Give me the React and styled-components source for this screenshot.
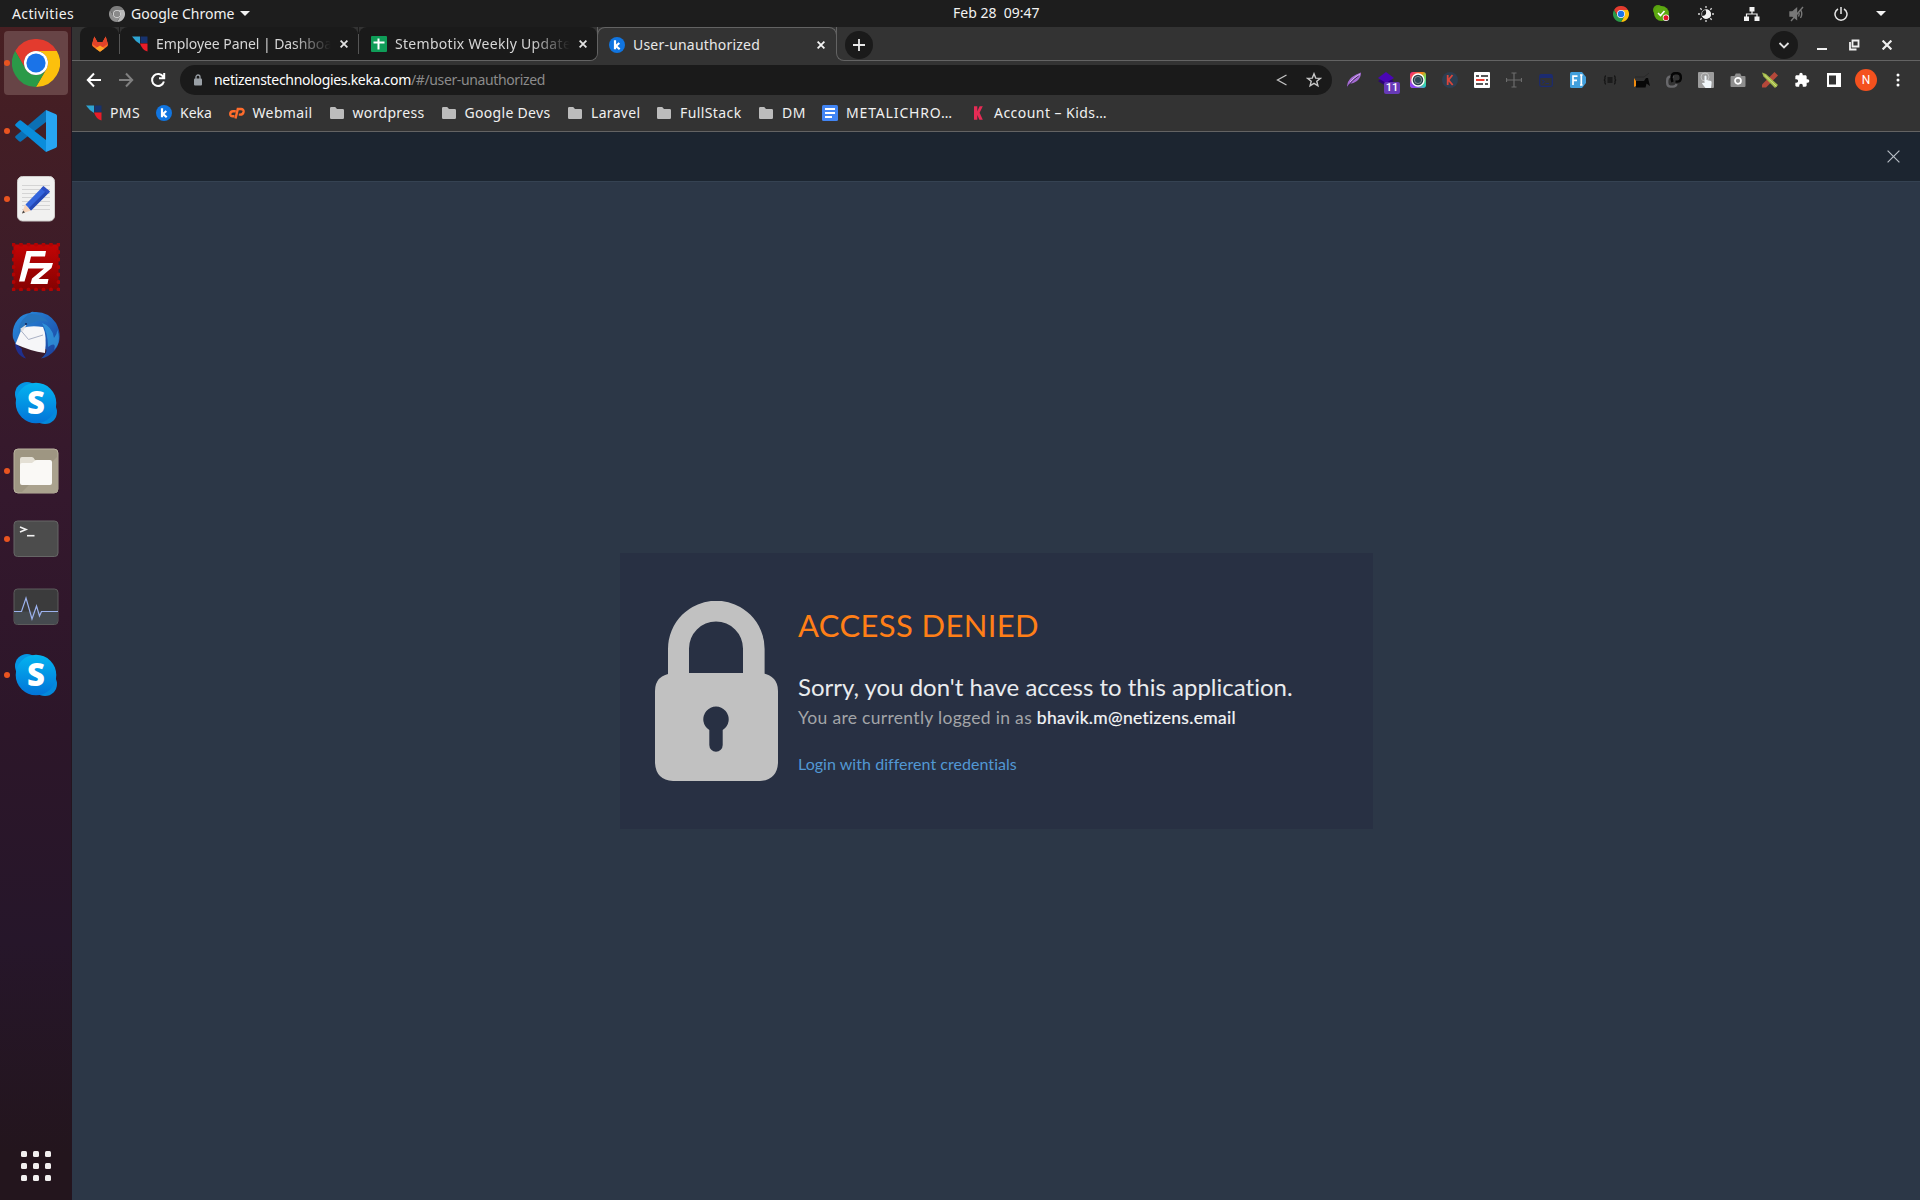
import React from 'react';
import styled, { createGlobalStyle } from 'styled-components';

const Global = createGlobalStyle`
  * { box-sizing: border-box; }
  body { margin: 0; overflow: hidden; background: #2c3747; }
  svg { display: block; flex: none; }
`;

const Desktop = styled.div`
  display: flex;
  flex-direction: column;
  width: 1920px;
  height: 1200px;
  font-family: 'Noto Sans', 'Open Sans', sans-serif;
  font-size: 14px;
  color: #fff;
`;

/* ---------- system bar ---------- */
const SystemBar = styled.header`
  display: grid;
  grid-template-columns: 1fr auto 1fr;
  align-items: center;
  height: 27px;
  flex: none;
  background: #1d1d1d;
  color: #f2f2f2;
`;
const BarLeft = styled.div`
  display: flex;
  align-items: center;
  padding-left: 12px;
`;
const BarRight = styled.div`
  display: flex;
  align-items: center;
  justify-content: flex-end;
  padding-right: 15px;
`;
const Label = styled.span`
  white-space: pre;
  line-height: 20px;
  letter-spacing: ${(p) => p.$track || 0}px;
`;
const AppMenu = styled.div`
  display: flex;
  align-items: center;
  margin-left: 35px;
  gap: 6px;
`;
const Clock = styled(Label)`
  margin-left: 73px;
`;
const Centered = styled.div`
  margin-top: -2px;
  width: 160px;
`;
const Slot = styled.span`
  display: flex;
  flex: none;
  align-items: center;
  justify-content: center;
  width: ${(p) => p.$w || 32}px;
`;

/* ---------- layout ---------- */
const Workspace = styled.div`
  display: flex;
  flex: 1;
  min-height: 0;
`;
const Dock = styled.nav`
  display: flex;
  flex-direction: column;
  justify-content: space-between;
  align-items: center;
  width: 72px;
  flex: none;
  padding: 4px 0 19px;
  background: linear-gradient(#481f22 0%, #3c1c29 22%, #34182d 40%, #2c1629 60%, #26162a 78%, #23151d 96%);
  border-right: 1px solid #24141f;
`;
const DockList = styled.div`
  display: flex;
  flex-direction: column;
  gap: 4px;
  width: 100%;
`;
const DockItem = styled.div`
  display: flex;
  align-items: center;
  height: 64px;
  padding-left: 4px;
`;
const RunDot = styled.span`
  width: 6px;
  height: 6px;
  margin-right: -6px;
  border-radius: 50%;
  background: ${(p) => (p.$on ? '#e95420' : 'transparent')};
  z-index: 1;
`;
const DockTile = styled.span`
  display: flex;
  align-items: center;
  justify-content: center;
  width: 64px;
  height: 64px;
  border-radius: 4px;
  background: ${(p) => (p.$focused ? '#674446' : 'transparent')};
`;
const AppsGrid = styled.div`
  display: grid;
  grid-template-columns: repeat(3, 6px);
  grid-auto-rows: 6px;
  gap: 6px;
  margin-left: 1px;
`;
const AppsDot = styled.i`
  border-radius: 1.5px;
  background: #f2f0f0;
`;

const Browser = styled.main`
  display: flex;
  flex-direction: column;
  flex: 1;
  min-width: 0;
  background: #333;
`;

/* ---------- tabs ---------- */
const line = '#636363';
const TabStrip = styled.div`
  display: flex;
  height: 34px;
  flex: none;
`;
const IdleTabs = styled.div`
  display: flex;
  width: 526px;
  padding-left: 8px;
  border-right: 1px solid ${line};
  border-bottom: 1px solid ${line};
  border-bottom-right-radius: 8px;
`;
const IdleTab = styled.div`
  display: flex;
  align-items: center;
  width: ${(p) => p.$w}px;
  padding-left: 12px;
  background: #1a1a1a;
  border-radius: 8px 8px ${(p) => (p.$last ? '7px' : 0)} 0;
  color: #d6d6d6;
`;
const TabGap = styled.div`
  display: flex;
  align-items: center;
  width: 1px;
  background: #1a1a1a;
  &::before {
    content: '';
    width: 1px;
    height: 20px;
    background: #555;
  }
`;
const TabTitle = styled(Label)`
  width: ${(p) => p.$w}px;
  margin-left: 8px;
  overflow: hidden;
  mask-image: ${(p) => (p.$fade ? 'linear-gradient(90deg, #000 78%, transparent)' : 'none')};
`;
const ActiveTab = styled.div`
  position: relative;
  display: flex;
  align-items: center;
  width: 240px;
  margin-left: -1px;
  padding: 1px 0 0 12px;
  color: #e8e8e8;
  &::before {
    content: '';
    position: absolute;
    inset: 0 0 8px;
    border: 1px solid ${line};
    border-bottom: 0;
    border-radius: 8px 8px 0 0;
  }
`;
const StripRest = styled.div`
  display: flex;
  align-items: center;
  flex: 1;
  margin-left: -1px;
  padding: 2px 8px 0 8px;
  border-left: 1px solid ${line};
  border-bottom: 1px solid ${line};
  border-bottom-left-radius: 8px;
`;
const RoundButton = styled.span`
  display: flex;
  align-items: center;
  justify-content: center;
  width: 28px;
  height: 28px;
  border-radius: 50%;
  background: #1a1a1a;
`;
const WindowControls = styled.div`
  display: flex;
  align-items: center;
  margin-left: auto;
`;

/* ---------- toolbar ---------- */
const Toolbar = styled.div`
  display: flex;
  align-items: center;
  height: 38px;
  flex: none;
  padding: 0 6px;
`;
const Omnibox = styled.div`
  display: flex;
  align-items: center;
  width: 1152px;
  height: 30px;
  margin: 0 6px 0 2px;
  padding-left: 12px;
  border-radius: 15px;
  background: #1a1a1a;
`;
const Url = styled.div`
  flex: 1;
  display: flex;
  margin-left: 10px;
`;
const Path = styled(Label)`
  color: #8b8b8b;
`;
const Extension = styled(Slot)`
  position: relative;
  height: 30px;
`;
const CountBadge = styled.span`
  position: absolute;
  left: 14px;
  top: 17px;
  width: 16px;
  height: 12px;
  border-radius: 2px;
  background: #673ab7;
  font: 500 11px/12px Roboto, sans-serif;
  text-align: center;
`;
const Avatar = styled.span`
  width: 22px;
  height: 22px;
  border-radius: 50%;
  background: #f4511e;
  font: 400 12px/22px Roboto, sans-serif;
  text-align: center;
`;

/* ---------- bookmarks ---------- */
const Bookmarks = styled.div`
  display: flex;
  align-items: center;
  height: 33px;
  flex: none;
  padding: 0 0 5px 14px;
  border-bottom: 1px solid ${line};
  color: #f0f0f0;
`;
const Bookmark = styled.span`
  display: flex;
  align-items: center;
  gap: 8px;
  width: ${(p) => p.$w}px;
`;

/* ---------- page ---------- */
const PageHeader = styled.div`
  display: flex;
  align-items: center;
  justify-content: flex-end;
  height: 50px;
  flex: none;
  padding-right: 20px;
  background: #1c2530;
  border-bottom: 1px solid #354252;
`;
const PageBody = styled.section`
  display: flex;
  align-items: center;
  justify-content: center;
  flex: 1;
  padding-left: 1px;
  background: #2c3747;
`;
const Card = styled.article`
  display: flex;
  width: 753px;
  height: 276px;
  padding: 48px 35px;
  background: #283043;
  gap: 20px;
  font-family: Lato, 'Open Sans', sans-serif;
  font-variant-ligatures: none;
  white-space: nowrap;
`;
const Message = styled.div`
  display: flex;
  flex-direction: column;
`;
const Title = styled.h1`
  margin: 4px 0 26px;
  font-size: 31px;
  line-height: 40px;
  font-weight: 400;
  letter-spacing: 0.37px;
  color: #ff7f17;
`;
const Lead = styled.p`
  margin: 0;
  font-size: 24px;
  line-height: 32px;
  color: #e9ebee;
`;
const Detail = styled.p`
  margin: 0;
  font-size: 17.5px;
  line-height: 30px;
  letter-spacing: 0.31px;
  color: #a3a5a8;
`;
const Email = styled.span`
  color: #f4f5f6;
  -webkit-text-stroke: 0.2px #f4f5f6;
`;
const RetryLink = styled.a`
  margin-top: 19px;
  font-size: 16px;
  line-height: 24px;
  letter-spacing: 0.04px;
  color: #5298d4;
`;

/* ---------- icons ---------- */
const Chrome = ({ size, gray }) => (
  <svg width={size} height={size} viewBox="0 0 48 48">
    <path d="M3.2 12A24 24 0 0 1 44.8 12H24A12 12 0 0 0 13.6 30Z" fill={gray ? '#7d7d7d' : '#e33b2e'} />
    <path d="M44.8 12A24 24 0 0 1 24 48L34.4 30A12 12 0 0 0 24 12Z" fill={gray ? '#b9b9b9' : '#fcc00c'} />
    <path d="M3.2 12L13.6 30A12 12 0 0 0 34.4 30L24 48A24 24 0 0 1 3.2 12Z" fill={gray ? '#8f8f8f' : '#2a9a48'} />
    <circle cx="24" cy="24" r="12" fill={gray ? '#e4e4e4' : '#fff'} />
    <circle cx="24" cy="24" r="9.6" fill={gray ? '#8a8a8a' : '#1a73e8'} />
  </svg>
);
const VsCode = () => (
  <svg width="42" height="42" viewBox="0 0 42 42">
    <path d="M31 0L31 12L6 31.5Q5 32 4 31.2L.6 28Q-.4 27 .6 26Z" fill="#0b70b4" />
    <path d="M31 42L31 30L6 10.5Q5 10 4 10.8L.6 14Q-.4 15 .6 16Z" fill="#0a8ddb" />
    <path d="M31 0L41 4.3Q42 5 42 6V36Q42 37 41 37.7L31 42Z" fill="#27a5f2" />
  </svg>
);
const Editor = () => (
  <svg width="38" height="46" viewBox="0 0 38 46">
    <rect x=".5" y=".5" width="37" height="44.5" rx="5" fill="#f1f1f0" stroke="#cfcccb" />
    <path d="M5 9.5H33M5 13.5H33M5 17.5H33M5 21.5H33M5 25.5H33M5 29.5H33M5 33.5H33" stroke="#d4d4d4" />
    <path d="M5 37.500L8 28.500L14 34.500Z" fill="#f6d3b9" />
    <path d="M5 37.500L6.200 34.500L8 36.500Z" fill="#454545" />
    <path d="M8.500 28.500L26 10.500L32.500 16L14 34.500Z" fill="#3465dc" />
    <path d="M12 32L30.500 13.500L32.500 16L14 34.500Z" fill="#2448b5" />
    <path d="M24 12.500L26.500 10L33 15.500L30.500 18Z" fill="#2d50c4" />
  </svg>
);
const FileZilla = () => (
  <svg width="48" height="48" viewBox="0 0 48 48" fontFamily="'Open Sans', sans-serif" fontWeight="700" fontStyle="italic" fill="#fff">
    <defs>
      <linearGradient id="fz" x2="0" y2="1"><stop stopColor="#c40404" /><stop offset="1" stopColor="#850202" /></linearGradient>
    </defs>
    <rect x="1.500" y="1.500" width="45" height="45" fill="url(#fz)" />
    <rect x="1.500" y="1.500" width="45" height="45" fill="none" stroke="#b00404" strokeWidth="4" strokeLinecap="round" strokeDasharray="0 7.500" />
    <path d="M14.500 8H34L33 13.500H19L17.500 20H41L39.500 25L26.500 36H36.500L35.500 41H18.500L20 35.500L32 25.500H16.300L12.500 38.500H7Z" />
  </svg>
);
const Thunderbird = () => (
  <svg width="48" height="48" viewBox="0 0 48 48">
    <defs>
      <linearGradient id="tb" x2="1" y2="1"><stop stopColor="#2a8fe0" /><stop offset=".6" stopColor="#1f5fb8" /><stop offset="1" stopColor="#1c3a96" /></linearGradient>
    </defs>
    <path d="M1 27C-1 14 7 3 18 2Q20 0 22 1Q36 0 44 12Q52 27 43 39Q37 46 29 47.500Q36 42 34 38L4 34Z" fill="url(#tb)" />
    <path d="M3 32C3 40 8 46 14 47.500Q9 41 10 38Z" fill="#1f2f8d" />
    <path d="M17 3Q30 2 36 11Q28 8 20 12Q11 14 8 24Q4 12 17 3Z" fill="#2674bd" />
    <path d="M30 12Q40 15 42 27Q46 22 45 18Q50 31 42 39Q45 30 36 36Q36 22 30 12Z" fill="#35a6e6" opacity=".65" />
    <path d="M3.500 33L10 17Q19 14 31 16Q35 24 33 42Q18 40 3.500 33Z" fill="#f6f6f8" />
    <path d="M8.500 19L16.500 28.500L31 24" fill="none" stroke="#a9b0c4" />
    <path d="M8 18L15 13L11 20Z" fill="#dedede" />
    <circle cx="14" cy="13" r="1.100" fill="#122a5e" />
  </svg>
);
const Skype = () => (
  <svg width="42" height="42" viewBox="0 0 42 42">
    <defs>
      <linearGradient id="sk" x2="0" y2="1"><stop stopColor="#04b4f0" /><stop offset="1" stopColor="#0274d8" /></linearGradient>
    </defs>
    <circle cx="12" cy="12" r="12" fill="#0596e4" />
    <circle cx="30" cy="30" r="12" fill="#0489dc" />
    <circle cx="21" cy="21" r="20.300" fill="url(#sk)" />
    <text x="21" y="32" textAnchor="middle" fontFamily="'Open Sans', sans-serif" fontWeight="800" fontSize="31" fill="#fff">S</text>
  </svg>
);
const Files = () => (
  <svg width="46" height="46" viewBox="0 0 46 46">
    <rect x="1" y="1" width="44" height="44" rx="4" fill="#9e9682" stroke="#b9b29e" />
    <path d="M45 8V41a4 4 0 0 1-4 4H8Z" fill="#aaa28e" />
    <path d="M7 17V11Q7 9 9 9H19Q20.500 9 22 12H36V20H7Z" fill="#e4e0d5" />
    <path d="M9 15H19Q22 12 24 12H37Q39 12 39 14V35Q39 37 37 37H9Q7 37 7 35V17Q7 15 9 15Z" fill="#faf9f6" />
  </svg>
);
const Terminal = () => (
  <svg width="46" height="38" viewBox="0 0 46 38">
    <rect x="1" y="1" width="44" height="35.500" rx="3.500" fill="#4c4c4c" stroke="#666" />
    <path d="M7 7L13 9.500L7 12" fill="none" stroke="#f2f2f2" strokeWidth="1.600" />
    <path d="M14 15.700H21.500" stroke="#f2f2f2" strokeWidth="1.600" />
  </svg>
);
const Monitor = () => (
  <svg width="46" height="38" viewBox="0 0 46 38">
    <rect x="1" y="1" width="44" height="35.500" rx="3.500" fill="#3b3b3c" stroke="#5c5c5c" />
    <path d="M1.500 23.500H44.500V33Q44.500 36 41.500 36H4.500Q1.500 36 1.500 33Z" fill="#454a4f" />
    <path d="M1 23.500H8.500L13 10L19 31L23.500 18L26.500 28L28.500 23.500H45" fill="none" stroke="#9cb2ee" strokeWidth="1.200" />
  </svg>
);
const Gitlab = () => (
  <svg width="16" height="16" viewBox="0 0 16 16">
    <path d="M2.300 .5L5.400 6H10.600L13.700 .5L16 8.500Q16 10 14.500 11L8 15.800L1.500 11Q0 10 0 8.500Z" fill="#fc6d26" />
    <path d="M2.300 .5L5.400 6H10.600L13.700 .5L15.900 8L8 13L.1 8Z" fill="#e24329" />
    <path d="M8 9.500L12.500 12.500L8 15.800L3.500 12.500Z" fill="#fca326" />
  </svg>
);
const Netizens = () => (
  <svg width="16" height="16" viewBox="0 0 16 16">
    <path d="M0 .5H8V8Q3 5 0 .5Z" fill="#2ea5d3" />
    <path d="M8.500 .5H15.500V7H8.500Z" fill="#17336f" />
    <path d="M8 7.500H15.500V15.500Q10 14 8 7.500Z" fill="#ea1c29" />
  </svg>
);
const Sheets = () => (
  <svg width="16" height="16" viewBox="0 0 16 16">
    <rect width="16" height="16" rx="1" fill="#0f9d58" />
    <path d="M2.500 6.500H13.500M7.500 2.500V13.500" stroke="#fff" strokeWidth="2" />
  </svg>
);
const Keka = () => (
  <svg width="16" height="16" viewBox="0 0 16 16">
    <circle cx="8" cy="8" r="8" fill="#1175e0" />
    <path d="M6 3.200V12.300M10.300 6L7 9L10.700 12.300" fill="none" stroke="#fff" strokeWidth="2.200" />
  </svg>
);
const CPanel = () => (
  <svg width="16" height="16" viewBox="0 0 16 16" fill="none" stroke="#ff6c2c" strokeWidth="2.400">
    <path d="M6.800 6.300H4Q1.300 6.300 1.200 9Q1.300 11.500 4 11.300H5.500" />
    <path d="M6.500 13.500L8.800 4H12Q14.800 4.200 14.600 6.700Q14 9.700 11 9.600H9.800" />
  </svg>
);
const Folder = () => (
  <svg width="16" height="16" viewBox="0 0 16 16">
    <path d="M1 3.300Q1 2 2.300 2H6.200L8 4H13.700Q15 4 15 5.300V12.700Q15 14 13.700 14H2.300Q1 14 1 12.700Z" fill="#bcbcbc" />
  </svg>
);
const Docs = () => (
  <svg width="16" height="16" viewBox="0 0 16 16">
    <rect width="16" height="16" rx="1.500" fill="#4285f4" />
    <path d="M3 4H13M3 8H13M3 12H10" stroke="#fff" strokeWidth="2" />
  </svg>
);
const RedK = () => (
  <svg width="16" height="16" viewBox="0 0 16 16">
    <path d="M4 1.300H7.300V6.500L9.600 1.300H12.800L9.600 7.700L12.800 14.700H9.400L7.300 10V14.700H4Z" fill="#e62b55" />
  </svg>
);
const Cross = ({ size = 8, color = '#e2e2e2', w = 1.8 }) => (
  <svg width={size} height={size} viewBox={`0 0 ${size} ${size}`}>
    <path d={`M.6 .6L${size - 0.6} ${size - 0.6}M${size - 0.6} .6L.6 ${size - 0.6}`} stroke={color} strokeWidth={w} />
  </svg>
);
const Glyph = ({ d, color = '#fff', w = 1.8, fill = 'none', s = 16 }) => (
  <svg width={s} height={s} viewBox="0 0 16 16"><path d={d} fill={fill} stroke={color} strokeWidth={w} /></svg>
);

const CaretDown = ({ w = 10 }) => (
  <svg width={w} height="5" viewBox="0 0 10 5"><path d="M0 0H10L5 5Z" fill="#f2f2f2" /></svg>
);

/* system indicators */
const SkypeTray = () => (
  <svg width="17" height="17" viewBox="0 0 17 17">
    <circle cx="5" cy="5" r="5" fill="#57a00e" /><circle cx="8.500" cy="8.500" r="7.500" fill="#5ca811" />
    <path d="M5 8L7.500 10.500L11.500 6" fill="none" stroke="#fff" strokeWidth="1.600" />
    <circle cx="13" cy="12.800" r="3.200" fill="#fff" /><circle cx="13" cy="12.800" r="2.500" fill="#e0142a" />
  </svg>
);
const NightLight = () => (
  <svg width="16" height="16" viewBox="0 0 16 16">
    <path d="M8 0V2M8 14V16M0 8H2M14 8H16M2.300 2.300L3.700 3.700M12.300 12.300L13.700 13.700M2.300 13.700L3.700 12.300M12.300 3.700L13.700 2.300" stroke="#d8d8d8" strokeWidth="1.300" />
    <circle cx="8" cy="8" r="4.400" fill="none" stroke="#999" /><path d="M7.500 3.500A4.700 4.700 0 1 1 4 10Q10 10 7.500 3.500Z" fill="#f2f2f2" />
  </svg>
);
const Network = () => (
  <svg width="16" height="14" viewBox="0 0 16 14">
    <path d="M5.500 0H10.500V4.500H5.500ZM0 9.500H5V14H0ZM10.500 9.500H15.500V14H10.500Z" fill="#f2f2f2" />
    <path d="M8 4V7M2.500 10V7H13V10" fill="none" stroke="#f2f2f2" strokeWidth="1.200" />
  </svg>
);
const Muted = () => (
  <svg width="16" height="16" viewBox="0 0 16 16" fill="none" stroke="#787878" strokeWidth="1.400">
    <path d="M1 6H3.500L7.500 2.500V13L3.500 10H1Z" fill="#787878" /><path d="M9.500 5.500Q11 8 9.500 10.500M11.500 3.500Q14 8 11.500 12M2 15L14 1" />
  </svg>
);
const Power = () => (
  <svg width="14" height="14" viewBox="0 0 14 14" fill="none" stroke="#e6e6e6" strokeWidth="1.500">
    <path d="M4 2A6 6 0 1 0 10 2M7 0V7" />
  </svg>
);

/* toolbar extensions */
const Feather = () => (
  <svg width="16" height="16" viewBox="0 0 16 16">
    <path d="M1 15.500Q1 9 6 5Q10 2 15 .5Q15 6 11 9Q7 12 3 12Z" fill="#a46bd3" /><path d="M1 15.500Q6 8 13 3.500" stroke="#38264a" fill="none" strokeWidth=".9" />
    <path d="M4 10Q8 5 14 2" stroke="#d5b0f0" strokeWidth="1" fill="none" />
  </svg>
);
const Stack = () => (
  <svg width="16" height="16" viewBox="0 0 16 16"><path d="M8 5L16 9L8 14L0 9Z" fill="#2c0379" /><path d="M8 0L16 6L8 11L0 6Z" fill="#4a06b5" /></svg>
);
const Lens = () => (
  <svg width="16" height="16" viewBox="0 0 16 16">
    <defs><linearGradient id="ln" x2="1" y2="1"><stop stopColor="#f1198b" /><stop offset=".4" stopColor="#f78a15" /><stop offset=".6" stopColor="#7fd94c" /><stop offset="1" stopColor="#0fcaf0" /></linearGradient>
      <linearGradient id="lo" x1=".8" x2=".2" y1=".2" y2="1"><stop offset=".5" stopColor="#9b3bf0" stopOpacity="0" /><stop offset=".9" stopColor="#8b42f5" /></linearGradient></defs>
    <rect width="16" height="16" rx="3" fill="url(#ln)" /><rect width="16" height="16" rx="3" fill="url(#lo)" />
    <circle cx="8" cy="8" r="6" fill="#26414a" stroke="#fff" strokeWidth="1.400" /><circle cx="8" cy="8" r="3.600" fill="#2e4754" stroke="#d8d8d8" strokeWidth=".5" />
  </svg>
);
const KDisk = () => (
  <svg width="16" height="16" viewBox="0 0 16 16"><circle cx="8" cy="8" r="8" fill="#2d3e50" /><path d="M5.700 3V13M10.500 3L6.500 8L10.700 13" fill="none" stroke="#d9463b" strokeWidth="1.800" /></svg>
);
const Panels = () => (
  <svg width="16" height="16" viewBox="0 0 16 16"><rect width="16" height="16" rx="1" fill="#fff" /><path d="M2 4H5M7 4H14M2 12H9M11 12H14M12 8H14" stroke="#222" strokeWidth="1.700" /><path d="M2 8H10.500" stroke="#f03d31" strokeWidth="2" /></svg>
);
const Move = () => <Glyph color="#6c6c6c" w={1.2} d="M.5 8H15.500M8 .5V15.500M.5 6V10M15.500 6V10M5.500 1H10.500M5.500 15H10.500" />;
const Console = () => (
  <svg width="14" height="14" viewBox="0 0 14 14"><rect x=".7" y="1.700" width="12.600" height="11.600" rx="1.500" fill="none" stroke="#1c2b70" strokeWidth="1.200" /><path d="M1 3.500H13" stroke="#1c2b70" strokeWidth="3" /><path d="M3 7L5.500 8.500L3 10.500M6.500 10.500H10" fill="none" stroke="#1c2b70" /></svg>
);
const FontTag = () => (
  <svg width="16" height="16" viewBox="0 0 16 16"><path d="M1.500 0H12L16 5V11L12 16H1.500Q0 16 0 14.500V1.500Q0 0 1.500 0Z" fill="#419fdc" /><path d="M3 13V4.200H7.500M3 8.300H7M10 3H11.300V13H10M11.300 13H12.600M11.300 3H12.600" fill="none" stroke="#fff" strokeWidth="1.700" /></svg>
);
const Braces = () => <Glyph color="#151515" w={1.3} d="M4 4Q2.500 4 3 6.500Q3 8 1.800 8Q3 8 3 9.500Q2.500 12 4 12M12 4Q13.500 4 13 6.500Q13 8 14.200 8Q13 8 13 9.500Q13.500 12 12 12M5.500 6H10.500M5.500 8H10.500M5.500 10H10.500" />;
const Anteater = () => (
  <svg width="16" height="16" viewBox="0 0 16 16"><path d="M0 6L2 9V14L0 15Z" fill="#f28c0f" /><path d="M2 9H10L12 6H14L15.500 12L16 14L12.500 11.500L11.500 15.500H2Z" fill="#070707" /><path d="M1 5H10L15 1" fill="none" stroke="#292929" /></svg>
);
const Link = () => (
  <svg width="16" height="16" viewBox="0 0 16 16" fill="none" strokeWidth="2.400"><path d="M7.500 4.500H4.500Q1.200 4.700 1.200 8.500V11Q1.200 14.600 4.500 14.600H7Q10 14.500 10.500 12" stroke="#68686b" /><path d="M6.500 10Q5.500 7.500 5.500 5Q6 1.300 9 1.300H11.500Q14.800 1.600 14.800 5V6.500Q14.500 9.600 11.500 9.600H9.500" stroke="#050505" /></svg>
);
const Touch = () => (
  <svg width="16" height="16" viewBox="0 0 16 16"><rect width="16" height="16" rx="1" fill="#9c9c9c" /><circle cx="7" cy="5" r="4" fill="none" stroke="#c3c3c3" /><path d="M6.500 4Q8 3 8.500 4.500V8L13 9Q14 9.500 13.500 12L13 16H7.500L4 11.500Q4 10.300 6.500 11Z" fill="#f0f6fa" /></svg>
);
const Camera = () => (
  <svg width="16" height="16" viewBox="0 0 16 16"><path d="M1.500 4H4.500L5.800 1.500H10.200L11.500 4H14.500Q15.500 4 15.500 5V14Q15.500 15 14.500 15H1.500Q.5 15 .5 14V5Q.5 4 1.500 4Z" fill="#8e8e8e" /><circle cx="8" cy="8.800" r="3" fill="#8e8e8e" stroke="#fff" strokeWidth="1.700" /></svg>
);
const Pencils = () => (
  <svg width="16" height="16" viewBox="0 0 16 16"><path d="M12.500 0L16 3.500L4 15.500H0V12.500Z" fill="#b4483a" /><path d="M0 .5L4 2L16 13L13 16L1.500 4.500Z" fill="#a3bb4b" /><path d="M2.500 3L14.500 14.500" stroke="#d2df83" /></svg>
);
const Puzzle = () => (
  <svg width="16" height="16" viewBox="0 0 24 24"><path d="M20.500 11H19V7c0-1.100-.9-2-2-2h-4V3.500a2.500 2.500 0 0 0-5 0V5H4c-1.100 0-2 .9-2 2v3.800h1.500a2.700 2.700 0 0 1 0 5.400H2V20c0 1.100.9 2 2 2h3.800v-1.500a2.700 2.700 0 0 1 5.400 0V22H17c1.100 0 2-.9 2-2v-4h1.500a2.500 2.500 0 0 0 0-5z" fill="#fff" /></svg>
);
const SidePanel = () => (
  <svg width="14" height="14" viewBox="0 0 14 14"><rect width="14" height="14" fill="#fff" /><rect x="2" y="2.500" width="7" height="9" fill="#333" /></svg>
);
const Padlock = () => (
  <svg width="123" height="180" viewBox="0 0 123 180">
    <path d="M13 76V48A48.300 48.300 0 0 1 109.600 48V76H88V47.500A27 27 0 0 0 34 47.500V76Z" fill="#c1c1c1" />
    <path fillRule="evenodd" fill="#c1c1c1" d="M18 72H105Q123 74 123 90V162Q122 179 105 180H18Q1 179 0 162V90Q0 74 18 72ZM54.300 129V144A6.700 6.700 0 0 0 67.700 144V129A12.700 12.700 0 1 0 54.300 129Z" />
  </svg>
);

const dockApps = [
  { icon: <Chrome size={48} />, on: true, focused: true },
  { icon: <VsCode />, on: true },
  { icon: <Editor />, on: true },
  { icon: <FileZilla /> },
  { icon: <Thunderbird /> },
  { icon: <Skype /> },
  { icon: <Files />, on: true },
  { icon: <Terminal />, on: true },
  { icon: <Monitor /> },
  { icon: <Skype />, on: true },
];
const bookmarks = [
  [<Netizens />, 'PMS', 70, 0.38],
  [<Keka />, 'Keka', 72.5, 0.02],
  [<CPanel />, 'Webmail', 100, 0.37],
  [<Folder />, 'wordpress', 112, 0.33],
  [<Folder />, 'Google Devs', 126.5, 0.31],
  [<Folder />, 'Laravel', 89, 0.33],
  [<Folder />, 'FullStack', 102, 0.4],
  [<Folder />, 'DM', 64, 0.54],
  [<Docs />, 'METALICHRO…', 148, 0.845],
  [<RedK />, 'Account – Kids…', 140, 0.455],
];
const extensions = [Lens, KDisk, Panels, Move, Console, FontTag, Braces, Anteater, Link, Touch, Camera, Pencils, Puzzle, SidePanel];

export default function App() {
  return (
    <Desktop>
      <Global />
      <SystemBar>
        <BarLeft>
          <Label $track={0.37}>Activities</Label>
          <AppMenu>
            <Chrome size={16} gray />
            <Label>Google Chrome</Label>
            <CaretDown />
          </AppMenu>
        </BarLeft>
        <Centered><Clock>{'Feb 28\u00a0 09:47'}</Clock></Centered>
        <BarRight>
          <Slot $w={40}><Chrome size={16} /></Slot>
          <Slot $w={40}><SkypeTray /></Slot>
          <Slot $w={50}><NightLight /></Slot>
          <Slot $w={5} />
          <Slot $w={0}><Network /></Slot>
          <Slot $w={57}><Muted /></Slot>
          <Slot $w={0}><Power /></Slot>
          <Slot $w={48}><CaretDown /></Slot>
        </BarRight>
      </SystemBar>

      <Workspace>
        <Dock>
          <DockList>
            {dockApps.map((app, i) => (
              <DockItem key={i}>
                <RunDot $on={app.on} />
                <DockTile $focused={app.focused}>{app.icon}</DockTile>
              </DockItem>
            ))}
          </DockList>
          <AppsGrid>{Array.from({ length: 9 }, (_, i) => <AppsDot key={i} />)}</AppsGrid>
        </Dock>

        <Browser>
          <TabStrip>
            <IdleTabs>
              <IdleTab $w={39}><Gitlab /></IdleTab>
              <TabGap />
              <IdleTab $w={238}>
                <Netizens />
                <TabTitle $w={175} $fade $track={-0.07}>Employee Panel | Dashboard</TabTitle>
                <Slot $w={26}><Cross /></Slot>
              </IdleTab>
              <TabGap />
              <IdleTab $w={238} $last>
                <Sheets />
                <TabTitle $w={175} $fade $track={0.3}>Stembotix Weekly Update</TabTitle>
                <Slot $w={26}><Cross /></Slot>
              </IdleTab>
            </IdleTabs>
            <ActiveTab>
              <Keka />
              <TabTitle $w={175} $track={0.2}>User-unauthorized</TabTitle>
              <Slot $w={26}><Cross color="#f4f4f4" /></Slot>
            </ActiveTab>
            <StripRest>
              <RoundButton><Glyph d="M8 2V14M2 8H14" color="#e8e8e8" /></RoundButton>
              <WindowControls>
                <RoundButton><Glyph d="M3.500 6L8 10.500L12.500 6" color="#e0e0e0" /></RoundButton>
                <Slot $w={48}><Glyph d="M3 12H13" color="#f0f0f0" w={2} /></Slot>
                <Slot $w={16}><Glyph d="M6.500 3.500H12.500V9.500H6.500ZM4 5V12.500H10.500" color="#f0f0f0" w={1.8} /></Slot>
                <Slot $w={50}><Cross size={10} w={2.2} color="#f0f0f0" /></Slot>
              </WindowControls>
            </StripRest>
          </TabStrip>

          <Toolbar>
            <Slot><Glyph d="M15 8H2M8 1.500L1.800 8L8 14.500" w={2} /></Slot>
            <Slot><Glyph d="M1 8H14M8 1.500L14.200 8L8 14.500" w={2} color="#808080" /></Slot>
            <Slot><Glyph d="M13.300 5A6 6 0 1 0 13.900 9.500M14.200 1V6.200H9" w={2} /></Slot>
            <Slot $w={4} />
            <Omnibox>
              <Slot $w={12}>
                <svg width="8" height="12" viewBox="0 0 8 12"><rect y="4.500" width="8" height="7" rx="1" fill="#9aa0a6" /><path d="M2 5V3A2 2 0 0 1 6 3V5" fill="none" stroke="#9aa0a6" strokeWidth="1.300" /></svg>
              </Slot>
              <Url>
                <Label $track={-0.307}>netizenstechnologies.keka.com</Label>
                <Path $track={-0.374}>/#/user-unauthorized</Path>
              </Url>
              <Slot><Glyph d="M12.500 3L3.500 8L12.500 13" color="#c4c4c4" w={1.3} /></Slot>
              <Slot><Glyph d="M8 1.800L9.700 6.100L14.300 6.400L10.800 9.300L11.900 13.800L8 11.300L4.100 13.800L5.200 9.300L1.700 6.400L6.300 6.100Z" color="#c8c8c8" w={1.4} /></Slot>
              <Slot $w={2} />
            </Omnibox>
            <Extension><Feather /></Extension>
            <Extension><Stack /><CountBadge>11</CountBadge></Extension>
            {extensions.map((Icon, i) => <Extension key={i}><Icon /></Extension>)}
            <Slot><Avatar>N</Avatar></Slot>
            <Slot><svg width="4" height="14" viewBox="0 0 4 14" fill="#fff"><circle cx="2" cy="2" r="1.500" /><circle cx="2" cy="7" r="1.500" /><circle cx="2" cy="12" r="1.500" /></svg></Slot>
          </Toolbar>

          <Bookmarks>
            {bookmarks.map(([icon, text, w, track]) => (
              <Bookmark key={text} $w={w}>{icon}<Label $track={track}>{text}</Label></Bookmark>
            ))}
          </Bookmarks>

          <PageHeader><Cross size={13} color="#b8bec6" w={1.2} /></PageHeader>
          <PageBody>
            <Card>
              <Padlock />
              <Message>
                <Title>ACCESS DENIED</Title>
                <Lead>Sorry, you don't have access to this application.</Lead>
                <Detail>You are currently logged in as <Email>bhavik.m@netizens.email</Email></Detail>
                <RetryLink>Login with different credentials</RetryLink>
              </Message>
            </Card>
          </PageBody>
        </Browser>
      </Workspace>
    </Desktop>
  );
}
